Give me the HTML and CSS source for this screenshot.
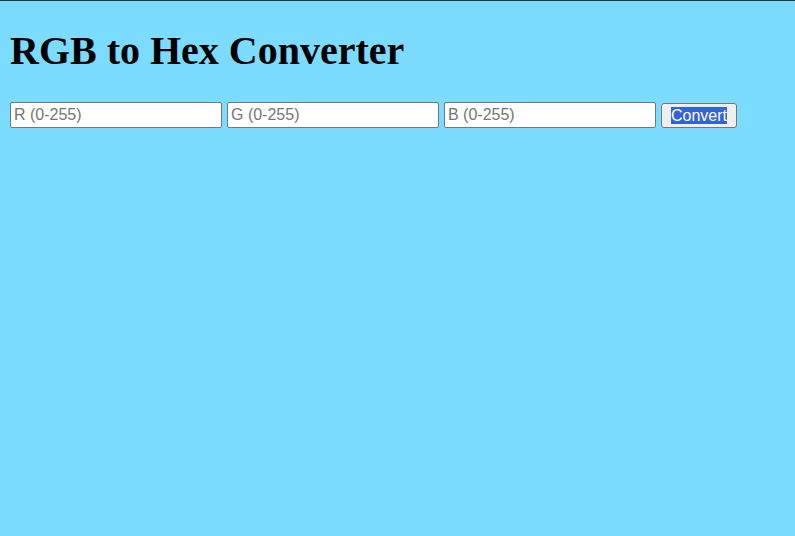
FILE: index.html
```html
<!DOCTYPE html>
<html lang="en">
<head>
<meta charset="utf-8">
<title>RGB to Hex Converter</title>
<link rel="stylesheet" href="styles.css">
</head>
<body>
<h1 class="title">RGB to Hex Converter</h1>
<div class="form-row">
  <input class="field" type="text" placeholder="R (0-255)">
  <input class="field" type="text" placeholder="G (0-255)">
  <input class="field" type="text" placeholder="B (0-255)">
  <button class="convert" type="button"><span class="sel">Convert</span></button>
</div>
</body>
</html>
```
FILE: styles.css
```css
html {
  margin: 0;
  border-top: 1px solid #333333;
  background: #7bdcff;
  height: 100%;
  box-sizing: border-box;
}
body {
  margin: 0;
  padding: 0 10px;
  font-family: "Liberation Serif", "Times New Roman", serif;
  color: #000;
}
.title {
  font-family: "Liberation Serif", "Times New Roman", serif;
  font-size: 40px;
  font-weight: bold;
  line-height: 46px;
  margin: 27px 0 28px 0;
}
.form-row {
  display: flex;
  align-items: flex-start;
  gap: 5px;
}
.field {
  box-sizing: border-box;
  width: 212px;
  height: 26px;
  margin: 0;
  padding: 3px 3px;
  border: 1px solid #767676;
  border-radius: 2px;
  background: #ffffff;
  font-family: "Liberation Sans", Arial, sans-serif;
  font-size: 16px;
  color: #000;
}
.field::placeholder {
  color: #757575;
}
.convert {
  box-sizing: border-box;
  height: 25px;
  margin: 1px 0 0 0;
  padding: 0 9px;
  border: 1px solid #767676;
  border-radius: 3px;
  background: #efefef;
  font-family: "Liberation Sans", Arial, sans-serif;
  font-size: 16px;
  line-height: 19px;
  color: #000;
}
.sel {
  background: #3165d4;
  color: #ffffff;
}
```
